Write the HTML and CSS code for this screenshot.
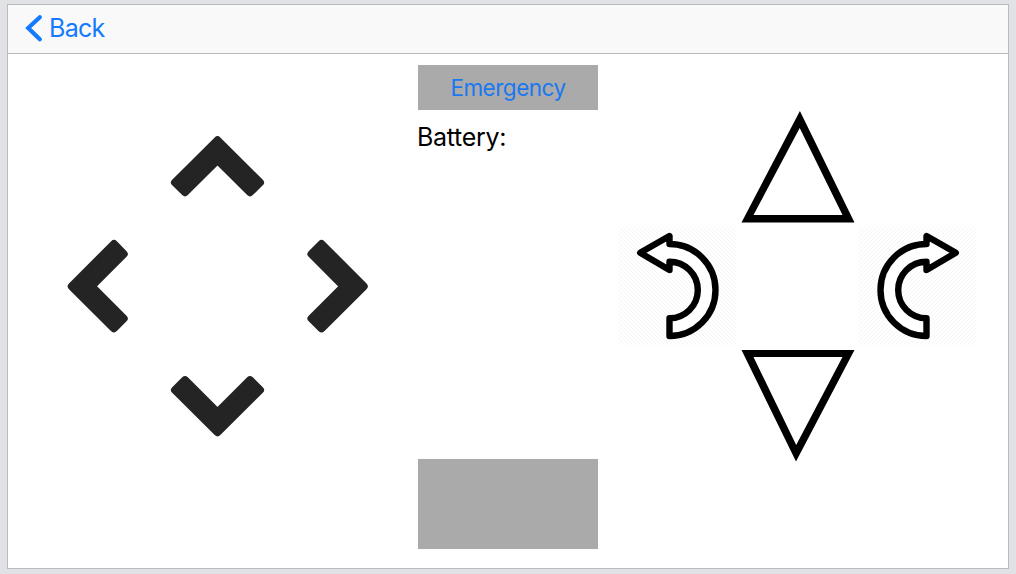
FILE: index.html
```html
<!DOCTYPE html>
<html lang="en">
<head>
<meta charset="utf-8">
<title>Controller</title>
<link rel="stylesheet" href="styles.css">
</head>
<body>
<div class="screen">
  <header class="navbar">
    <a class="back">
      <svg class="back-icon" width="18" height="30" viewBox="0 0 18 30"><path d="M14.8 4.2 3.2 15 14.8 26.2"/></svg>
      <span class="back-label">Back</span>
    </a>
  </header>
  <main class="controls">
    <div class="pad pad-move">
      <svg class="key up chevron" viewBox="0 0 120 120"><path d="M59.5 34.3 102 76.5 92 86.2 59.5 54 27 86.2 17 76.5Z"/></svg>
      <svg class="key left chevron" viewBox="0 0 120 120"><path d="M33.8 60.3 76 18 85.7 28 53.5 60.3 85.7 92.5 76 102.3Z"/></svg>
      <svg class="key right chevron" viewBox="0 0 120 120"><path d="M85.7 60.3 43.5 18 33.5 28 65.8 60.3 33.5 92.5 43.5 102.3Z"/></svg>
      <svg class="key down chevron" viewBox="0 0 120 120"><path d="M59.5 86.2 102 44 92 34.2 59.5 66.5 27 34.2 17 44Z"/></svg>
    </div>
    <section class="status">
      <button class="emergency">Emergency</button>
      <div class="battery">Battery:</div>
      <div class="video"></div>
    </section>
    <div class="pad pad-lift">
      <svg class="key up triangle" viewBox="0 0 120 120"><path d="M61.9 5 116.5 116.5H3.5ZM61.7 22 15.5 109H104.5Z"/></svg>
      <svg class="key left turn" viewBox="0 0 120 120">
        <defs><pattern id="hatch-left" width="4" height="4" patternUnits="userSpaceOnUse"><path class="hatch" d="M-1 -1 5 5M-1 3 1 5M3 -1 5 1"/></pattern></defs>
        <rect x="1" y="1" width="117" height="118" fill="url(#hatch-left)"/>
        <path class="arrow" d="M51.5 10V18A46 46 0 0 1 51.5 110V92.3A28.3 28.3 0 0 0 51.5 35.7V44L22.2 26.8Z"/>
      </svg>
      <svg class="key right turn" viewBox="0 0 120 120">
        <defs><pattern id="hatch-right" width="4" height="4" patternUnits="userSpaceOnUse"><path class="hatch" d="M-1 5 5 -1M-1 1 1 -1M3 5 5 3"/></pattern></defs>
        <rect x="1" y="1" width="117" height="118" fill="url(#hatch-right)"/>
        <path class="arrow" d="M68.5 10V18A46 46 0 0 0 68.5 110V92.3A28.3 28.3 0 0 1 68.5 35.7V44L97.8 26.8Z"/>
      </svg>
      <svg class="key down triangle" viewBox="0 0 120 120"><path d="M58 115.5 116.5 4H3.5ZM58.2 99 15.5 11H104.5Z"/></svg>
    </div>
  </main>
</div>
</body>
</html>
```
FILE: styles.css
```css
* { box-sizing: border-box; }
body {
  margin: 0;
  width: 1016px;
  height: 574px;
  padding: 4px 7px 5px 7px;
  overflow: hidden;
  background: #e1e2e6;
  font-family: Inter, "Liberation Sans", sans-serif;
}
.screen {
  display: flex;
  flex-direction: column;
  height: 565px;
  border: 1px solid #b9babd;
  background: #fff;
}
.navbar {
  display: flex;
  height: 49px;
  padding-left: 17px;
  background: #f9f9f9;
  border-bottom: 1px solid #b9b9b9;
}
.back {
  display: flex;
  align-items: center;
  height: 46px;
  color: #147aff;
}
.back-icon path {
  fill: none;
  stroke: #147aff;
  stroke-width: 4.2;
  stroke-linecap: round;
}
.back-label {
  margin-left: 6px;
  font-size: 25px;
  letter-spacing: -0.7px;
}
.controls {
  display: flex;
  padding-left: 30px;
}
.pad {
  display: grid;
  grid-template: repeat(3, 120px) / repeat(3, 120px);
  margin-top: 52px;
}
.key { width: 120px; height: 120px; display: block; }
.up { grid-area: 1 / 2; }
.left { grid-area: 2 / 1; }
.right { grid-area: 2 / 3; }
.down { grid-area: 3 / 2; }
.chevron path {
  fill: #242424;
  stroke: #242424;
  stroke-width: 8;
  stroke-linejoin: round;
}
.triangle path { fill: #000; fill-rule: evenodd; }
.arrow {
  fill: #fff;
  stroke: #000;
  stroke-width: 6.4;
  stroke-linejoin: round;
}
.hatch { stroke: #f5f5f5; stroke-width: 1; }
.status {
  width: 180px;
  margin: 11px 20px 0;
}
.emergency {
  display: block;
  width: 180px;
  height: 45px;
  padding: 0;
  border: 0;
  background: #aaa;
  color: #1a78f0;
  font: 22.5px Inter, "Liberation Sans", sans-serif;
  letter-spacing: -0.5px;
}
.battery {
  margin-top: 12px;
  margin-left: -1px;
  height: 30px;
  line-height: 30px;
  font-size: 25px;
  letter-spacing: -0.3px;
  color: #000;
}
.video {
  height: 90px;
  margin-top: 307px;
  background: #aaa;
}
```
